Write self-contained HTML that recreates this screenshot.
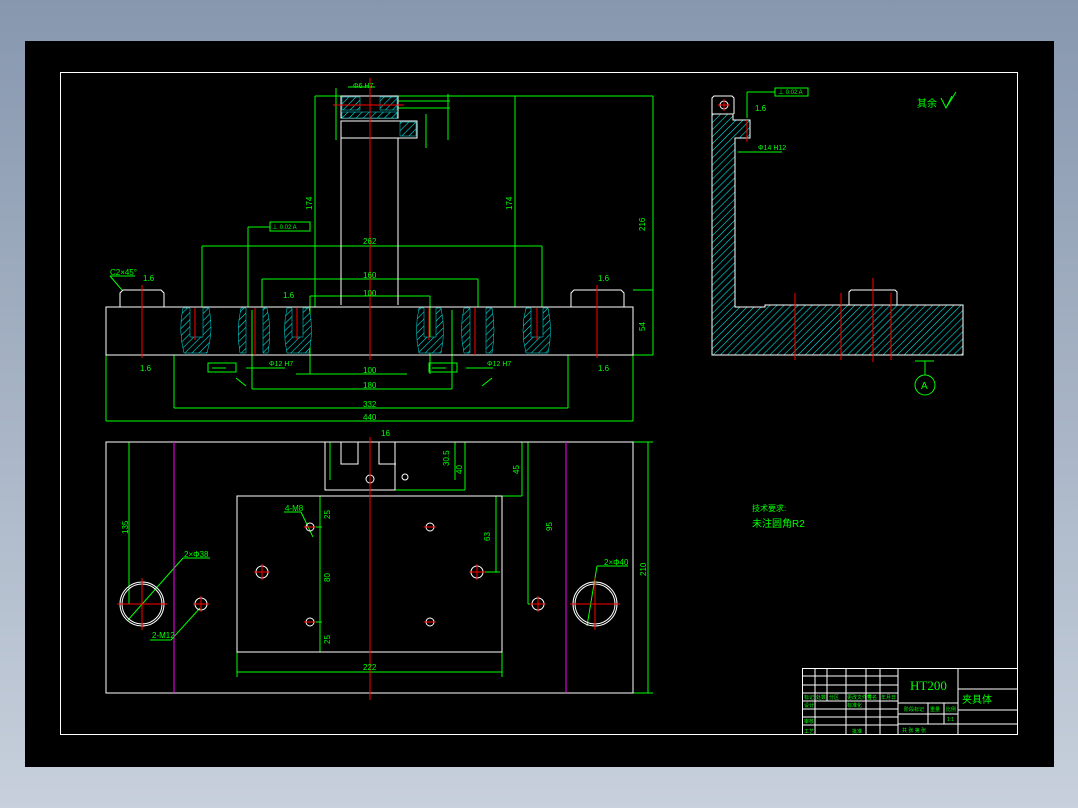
<!DOCTYPE html>
<html><head><meta charset="utf-8"><style>
html,body{margin:0;padding:0;width:1078px;height:808px;overflow:hidden;background:linear-gradient(#8797ae,#c7d0dc);}
svg{position:absolute;left:0;top:0}
text{font-family:"Liberation Sans","Noto Sans CJK SC",sans-serif;fill:#00ff00}
</style></head><body>
<svg width="1078" height="808" viewBox="0 0 1078 808">
<defs>
<pattern id="h" width="5" height="5" patternUnits="userSpaceOnUse" patternTransform="rotate(45)">
<rect width="5" height="5" fill="#000"/><line x1="0" y1="0" x2="0" y2="5" stroke="#00e5e5" stroke-width="1.2"/>
</pattern>
</defs>
<rect x="25" y="41" width="1029" height="726" fill="#000"/>
<rect x="60.5" y="72.5" width="957" height="662" fill="none" stroke="#fff" stroke-width="1"/>

<!-- ===== FRONT VIEW ===== -->
<g fill="none" stroke-width="1">
<g stroke="#00ff00">
<line x1="106" y1="421" x2="633" y2="421"/><line x1="106" y1="355" x2="106" y2="421"/><line x1="633" y1="355" x2="633" y2="421"/>
<line x1="174" y1="408" x2="568" y2="408"/><line x1="174" y1="355" x2="174" y2="408"/><line x1="568" y1="355" x2="568" y2="408"/>
<line x1="252" y1="389" x2="452" y2="389"/><line x1="252" y1="310" x2="252" y2="389"/><line x1="452" y1="310" x2="452" y2="389"/>
<line x1="296" y1="374" x2="407" y2="374"/>
<line x1="202" y1="246" x2="542" y2="246"/><line x1="202" y1="246" x2="202" y2="307"/><line x1="542" y1="246" x2="542" y2="307"/>
<line x1="262" y1="279" x2="478" y2="279"/><line x1="262" y1="279" x2="262" y2="307"/><line x1="478" y1="279" x2="478" y2="307"/>
<line x1="310" y1="296" x2="430" y2="296"/><line x1="310" y1="296" x2="310" y2="374"/><line x1="430" y1="296" x2="430" y2="374"/>
<line x1="315" y1="96" x2="315" y2="307"/><line x1="515" y1="96" x2="515" y2="307"/>
<line x1="315" y1="96" x2="653" y2="96"/><line x1="653" y1="96" x2="653" y2="355"/>
<line x1="633" y1="290" x2="653" y2="290"/><line x1="633" y1="355" x2="653" y2="355"/>
<line x1="248" y1="227" x2="248" y2="307"/><line x1="248" y1="227" x2="270" y2="227"/>
<line x1="336" y1="88" x2="336" y2="140"/><line x1="348" y1="87" x2="375" y2="87"/>
<line x1="398" y1="101" x2="450" y2="101"/><line x1="398" y1="108" x2="450" y2="108"/><line x1="448" y1="94" x2="448" y2="140"/>
<line x1="426" y1="114" x2="426" y2="148"/>
<line x1="110" y1="276" x2="135" y2="276"/><line x1="110" y1="276" x2="122" y2="290"/>
<line x1="212" y1="368" x2="226" y2="368"/><line x1="246" y1="368" x2="285" y2="368"/>
<line x1="432" y1="368" x2="446" y2="368"/><line x1="466" y1="368" x2="493" y2="368"/>
<line x1="236" y1="378" x2="246" y2="386"/><line x1="492" y1="378" x2="482" y2="386"/>
</g>
<rect x="270" y="222" width="40" height="9" stroke="#00ff00"/>
<rect x="208" y="363" width="28" height="9" stroke="#00ff00"/>
<rect x="429" y="363" width="28" height="9" stroke="#00ff00"/>
<rect x="775" y="88" width="33" height="8" stroke="#00ff00"/>
<g stroke="#fff">
<path d="M106 307 H633 V355 H106 Z"/>
<path d="M341 305 V138 M398 138 V305"/>
<path d="M120 307 V293 L123 290 H161 L164 293 V307"/>
<path d="M571 307 V293 L574 290 H621 L624 293 V307"/>
<rect x="341" y="121" width="76" height="17"/>
<rect x="341" y="96" width="57" height="22"/>
</g>
<g fill="url(#h)" stroke="#00e5e5" stroke-width="0.5">
<path d="M342 97 H360 V110 H342 Z"/><path d="M380 97 H397 V110 H380 Z"/>
<path d="M342 112 H397 V118 H342 Z"/><path d="M400 122 H416 V136 H400 Z"/>
<path d="M183 308 Q178 330 184 353 H207 Q214 330 209 308 H203 V337 H190 V308 Z"/>
<path d="M241 308 Q236 330 240 353 H246 V308 Z M263 308 V353 H268 Q272 330 267 308 Z"/>
<path d="M287 308 Q282 330 287 353 H309 Q314 330 309 308 H303 V337 H292 V308 Z"/>
<path d="M419 308 Q414 330 419 353 H441 Q446 330 441 308 H436 V337 H424 V308 Z"/>
<path d="M464 308 Q459 330 464 353 H470 V308 Z M486 308 V353 H492 Q496 330 492 308 Z"/>
<path d="M526 308 Q520 330 526 353 H548 Q553 330 548 308 H543 V337 H531 V308 Z"/>
</g>
<g stroke="#ff0000">
<line x1="370" y1="78" x2="370" y2="360"/><line x1="142" y1="285" x2="142" y2="358"/><line x1="597" y1="285" x2="597" y2="358"/>
<line x1="195" y1="308" x2="195" y2="340"/><line x1="255" y1="308" x2="255" y2="355"/><line x1="297" y1="308" x2="297" y2="340"/>
<line x1="429" y1="308" x2="429" y2="340"/><line x1="475" y1="308" x2="475" y2="355"/><line x1="537" y1="308" x2="537" y2="340"/>
<line x1="333" y1="105" x2="404" y2="105"/>
</g>
</g>
<g font-size="8">
<text x="110" y="275">C2×45°</text><text x="143" y="281">1.6</text><text x="598" y="281">1.6</text>
<text x="283" y="298">1.6</text><text x="363" y="244">262</text><text x="363" y="278">160</text><text x="363" y="296">100</text>
<text x="363" y="373">100</text><text x="363" y="388">180</text><text x="363" y="407">332</text><text x="363" y="420">440</text>
<text x="140" y="371">1.6</text><text x="598" y="371">1.6</text>
<text x="640" y="226" transform="rotate(-90 645 226)">216</text>
<text x="640" y="326" transform="rotate(-90 645 326)">54</text>
<text x="307" y="205" transform="rotate(-90 312 205)">174</text>
<text x="507" y="205" transform="rotate(-90 512 205)">174</text>
<text x="272" y="229" font-size="6">⊥ 0.02 A</text>
<text x="269" y="366" font-size="7">Φ12 H7</text><text x="487" y="366" font-size="7">Φ12 H7</text>
<text x="353" y="88" font-size="7">Φ6 H7</text>
</g>

<!-- ===== BOTTOM VIEW ===== -->
<g fill="none" stroke-width="1">
<g stroke="#00ff00">
<line x1="106" y1="442" x2="653" y2="442"/><line x1="633" y1="693" x2="653" y2="693"/><line x1="648" y1="442" x2="648" y2="693"/>
<line x1="129" y1="442" x2="129" y2="604"/><line x1="237" y1="672" x2="502" y2="672"/><line x1="237" y1="652" x2="237" y2="677"/><line x1="502" y1="652" x2="502" y2="677"/>
<line x1="320" y1="496" x2="320" y2="652"/><line x1="496" y1="496" x2="496" y2="572"/><line x1="477" y1="572" x2="500" y2="572"/>
<line x1="528" y1="442" x2="528" y2="604"/><line x1="538" y1="604" x2="528" y2="604"/>
<line x1="522" y1="442" x2="522" y2="496"/><line x1="502" y1="496" x2="522" y2="496"/>
<line x1="395" y1="490" x2="465" y2="490"/><line x1="465" y1="442" x2="465" y2="490"/><line x1="455" y1="442" x2="455" y2="480"/>
<line x1="330" y1="442" x2="330" y2="480"/><line x1="310" y1="527" x2="322" y2="527"/><line x1="310" y1="622" x2="322" y2="622"/>
<line x1="128" y1="620" x2="183" y2="558"/><line x1="183" y1="558" x2="210" y2="558"/>
<line x1="171" y1="640" x2="200" y2="608"/><line x1="150" y1="640" x2="171" y2="640"/>
<line x1="587" y1="626" x2="597" y2="566"/><line x1="597" y1="566" x2="628" y2="566"/>
<line x1="284" y1="512" x2="301" y2="512"/><line x1="301" y1="512" x2="313" y2="537"/>
</g>
<g stroke="#fff">
<rect x="106" y="442" width="527" height="251"/>
<rect x="237" y="496" width="265" height="156"/>
<path d="M325 442 V490 H395 V442"/><path d="M341 442 V464 H358 V442 M379 442 V464 H396"/>
<circle cx="142" cy="604" r="22"/><circle cx="142" cy="604" r="20"/>
<circle cx="595" cy="604" r="22"/><circle cx="595" cy="604" r="20"/>
<circle cx="201" cy="604" r="6"/><circle cx="538" cy="604" r="6"/>
<circle cx="310" cy="527" r="4"/><circle cx="430" cy="527" r="4"/>
<circle cx="262" cy="572" r="6"/><circle cx="477" cy="572" r="6"/>
<circle cx="310" cy="622" r="4"/><circle cx="430" cy="622" r="4"/>
<circle cx="370" cy="479" r="4"/><circle cx="405" cy="477" r="3"/>
</g>
<g stroke="#ff00ff"><line x1="174" y1="442" x2="174" y2="693"/><line x1="566" y1="442" x2="566" y2="693"/></g>
<g stroke="#ff0000">
<line x1="370" y1="437" x2="370" y2="700"/>
<line x1="117" y1="604" x2="167" y2="604"/><line x1="142" y1="578" x2="142" y2="630"/>
<line x1="570" y1="604" x2="620" y2="604"/><line x1="595" y1="578" x2="595" y2="630"/>
<line x1="193" y1="604" x2="209" y2="604"/><line x1="201" y1="596" x2="201" y2="612"/>
<line x1="530" y1="604" x2="546" y2="604"/><line x1="538" y1="596" x2="538" y2="612"/>
<line x1="254" y1="572" x2="270" y2="572"/><line x1="262" y1="564" x2="262" y2="580"/>
<line x1="469" y1="572" x2="485" y2="572"/><line x1="477" y1="564" x2="477" y2="580"/>
<line x1="304" y1="527" x2="316" y2="527"/><line x1="424" y1="527" x2="436" y2="527"/>
<line x1="304" y1="622" x2="316" y2="622"/><line x1="424" y1="622" x2="436" y2="622"/>
</g>
</g>
<g font-size="8">
<text x="184" y="557">2×Φ38</text><text x="604" y="565">2×Φ40</text><text x="152" y="638">2-M12</text>
<text x="285" y="511">4-M8</text><text x="363" y="670">222</text><text x="381" y="436">16</text>
<text x="124" y="530" transform="rotate(-90 128 530)">135</text>
<text x="642" y="572" transform="rotate(-90 646 572)">210</text>
<text x="326" y="578" transform="rotate(-90 330 578)">80</text>
<text x="548" y="527" transform="rotate(-90 552 527)">95</text>
<text x="486" y="537" transform="rotate(-90 490 537)">63</text>
<text x="515" y="470" transform="rotate(-90 519 470)">45</text>
<text x="458" y="470" transform="rotate(-90 462 470)">40</text>
<text x="445" y="462" transform="rotate(-90 449 462)">30.5</text>
<text x="326" y="515" transform="rotate(-90 330 515)">25</text>
<text x="326" y="640" transform="rotate(-90 330 640)">25</text>
</g>

<!-- ===== SIDE VIEW ===== -->
<g stroke-width="1">
<path d="M712 114 H733 V120 H750 V138 H735 V307 H765 V305 H963 V355 H712 Z" fill="url(#h)" stroke="#fff"/>
<path d="M712 114 V98 L714 96 H732 L734 98 V114" fill="none" stroke="#fff"/>
<path d="M849 305 V292 L851 290 H895 L897 292 V305" fill="none" stroke="#fff"/>
<line x1="712" y1="355" x2="963" y2="355" stroke="#fff"/>
<circle cx="724" cy="105" r="4" fill="none" stroke="#fff"/>
<g stroke="#ff0000"><line x1="718" y1="105" x2="730" y2="105"/><line x1="724" y1="99" x2="724" y2="111"/>
<line x1="795" y1="293" x2="795" y2="360"/><line x1="841" y1="293" x2="841" y2="360"/><line x1="873" y1="278" x2="873" y2="362"/><line x1="891" y1="293" x2="891" y2="360"/>
<line x1="747" y1="120" x2="747" y2="142"/></g>
<g stroke="#00ff00" fill="none">
<path d="M747 92 H775 M747 92 V118"/><line x1="738" y1="152" x2="782" y2="152"/>
<line x1="915" y1="361" x2="934" y2="361"/><line x1="925" y1="361" x2="925" y2="375"/>
<circle cx="925" cy="385" r="10"/>
<path d="M941 98 L946 108 L952 96 M946 108 L956 92"/>
</g>
</g>
<g font-size="8"><text x="755" y="111">1.6</text><text x="758" y="150" font-size="7">Φ14 H12</text>
<text x="917" y="107" font-size="10">其余</text><text x="921" y="389" font-size="10">A</text>
<text x="778" y="94" font-size="6">⊥ 0.02 A</text>
<text x="752" y="511" font-size="8">技术要求:</text><text x="752" y="527" font-size="10">未注圆角R2</text></g>

<!-- ===== TITLE BLOCK ===== -->
<g stroke="#fff" fill="none" stroke-width="1">
<rect x="802.5" y="668.5" width="215" height="66"/>
<line x1="898" y1="668" x2="898" y2="735"/><line x1="958" y1="668" x2="958" y2="735"/>
<line x1="958" y1="689" x2="1018" y2="689"/><line x1="958" y1="710" x2="1018" y2="710"/><line x1="958" y1="724" x2="1018" y2="724"/>
<line x1="898" y1="703" x2="958" y2="703"/><line x1="898" y1="714" x2="958" y2="714"/><line x1="898" y1="724" x2="958" y2="724"/>
<line x1="928" y1="703" x2="928" y2="724"/><line x1="944" y1="703" x2="944" y2="724"/>
<line x1="802" y1="676" x2="898" y2="676"/><line x1="802" y1="685" x2="898" y2="685"/><line x1="802" y1="693" x2="898" y2="693"/><line x1="802" y1="701" x2="898" y2="701"/>
<line x1="802" y1="709" x2="898" y2="709"/><line x1="802" y1="717" x2="898" y2="717"/><line x1="802" y1="725" x2="898" y2="725"/>
<line x1="815" y1="668" x2="815" y2="735"/><line x1="827" y1="668" x2="827" y2="701"/><line x1="846" y1="668" x2="846" y2="735"/><line x1="866" y1="668" x2="866" y2="735"/><line x1="880" y1="668" x2="880" y2="735"/>
</g>
<g font-size="5"><text x="804" y="699">标记</text><text x="816" y="699">处数</text><text x="829" y="699">分区</text><text x="847" y="699">更改文件号</text><text x="867" y="699">签名</text><text x="881" y="699">年月日</text>
<text x="804" y="707">设计</text><text x="847" y="707">标准化</text><text x="804" y="723">审核</text><text x="804" y="733">工艺</text><text x="852" y="733">批准</text>
<text x="904" y="711">阶段标记</text><text x="930" y="711">重量</text><text x="946" y="711">比例</text><text x="947" y="721">1:1</text>
<text x="902" y="732">共 张 第 张</text></g>
<text x="910" y="690" font-size="13" style="font-family:'Liberation Serif',serif">HT200</text>
<text x="962" y="703" font-size="10">夹具体</text>
</svg>
</body></html>
